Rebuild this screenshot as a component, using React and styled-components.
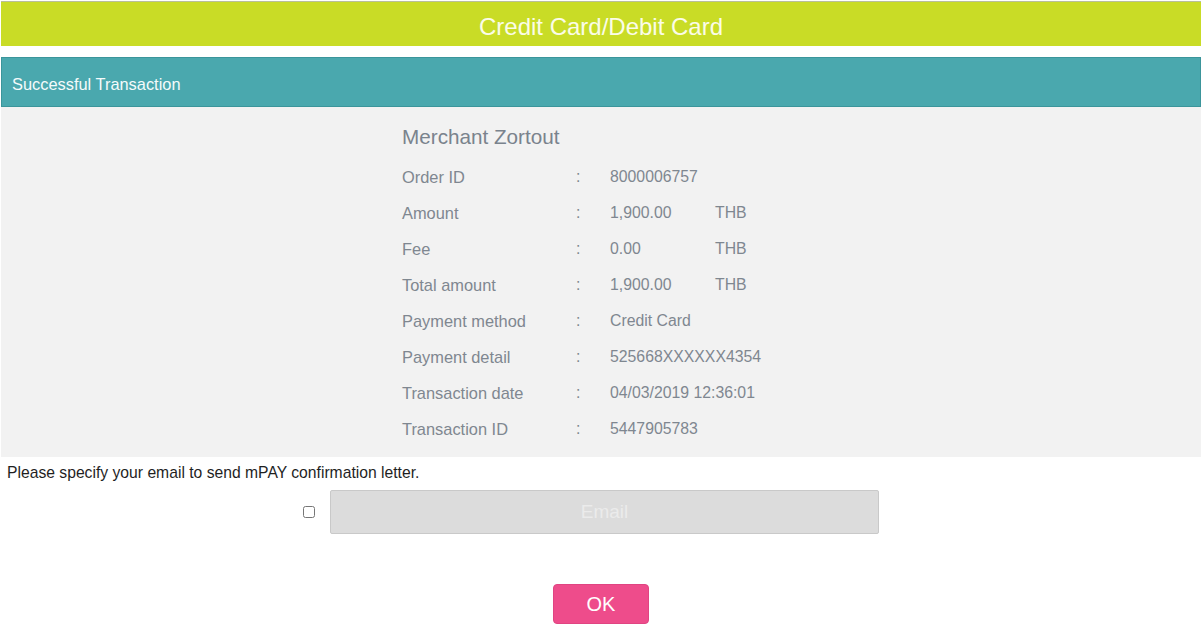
import React from "react";
import styled, { createGlobalStyle } from "styled-components";

const GlobalStyle = createGlobalStyle`
  html, body {
    margin: 0;
    padding: 0;
    background: #ffffff;
    font-family: "Liberation Sans", Arial, Helvetica, sans-serif;
  }
`;

const Page = styled.div`
  padding: 1px 1px 0 1px;
  width: 1200px;
`;

const TitleBar = styled.div`
  box-sizing: border-box;
  height: 45px;
  padding-top: 6px;
  background: #c9dc26;
  border-top: 1px solid #b9bf9a;
  display: flex;
  align-items: center;
  justify-content: center;
  color: #fbfce8;
  font-size: 24px;
`;

const StatusBar = styled.div`
  box-sizing: border-box;
  margin-top: 11px;
  height: 50px;
  padding: 4px 0 0 10px;
  background: #4aa8ae;
  border: 1px solid #3b959b;
  display: flex;
  align-items: center;
  color: #f4fbfb;
  font-size: 16.4px;
`;

const DetailPanel = styled.div`
  background: #f2f2f2;
  padding: 17px 0 1px;
  display: flex;
  justify-content: center;
`;

const DetailBlock = styled.div`
  width: 398px;
  color: #7f8790;
`;

const Merchant = styled.div`
  font-size: 20.7px;
  height: 26px;
  line-height: 26px;
  margin-bottom: 18px;
  color: #7a838d;
`;

const InfoRow = styled.div`
  display: grid;
  grid-template-columns: 174px 34px 105px auto;
  height: 36px;
  line-height: 18px;
  font-size: 15.8px;
`;

const Label = styled.span`
  font-size: 16.4px;
`;

const Value = styled.span`
  white-space: nowrap;
`;

const Note = styled.div`
  padding: 7px 6px 0;
  font-size: 15.7px;
  color: #1f1f1f;
  height: 17px;
  line-height: 17px;
`;

const EmailRow = styled.div`
  display: flex;
  align-items: center;
  justify-content: center;
  gap: 15px;
  padding-right: 20px;
  margin-top: 9px;
`;

const Check = styled.input`
  width: 12px;
  height: 12px;
  margin: 0;
`;

const EmailInput = styled.input`
  box-sizing: border-box;
  width: 549px;
  height: 44px;
  background: #dcdcdc;
  border: 1px solid #c9c9c9;
  border-radius: 2px;
  text-align: center;
  font-family: "Liberation Sans", Arial, sans-serif;
  font-size: 19px;
  color: #555;
  &::placeholder {
    color: #ebebeb;
  }
`;

const ButtonRow = styled.div`
  display: flex;
  justify-content: center;
  margin-top: 50px;
`;

const OkButton = styled.button`
  width: 96px;
  height: 40px;
  background: #ee4c8b;
  border: 1px solid #e04482;
  border-radius: 4px;
  color: #ffffff;
  font-family: "Liberation Sans", Arial, sans-serif;
  font-size: 20px;
  cursor: pointer;
`;

const rows = [
  ["Order ID", "8000006757", ""],
  ["Amount", "1,900.00", "THB"],
  ["Fee", "0.00", "THB"],
  ["Total amount", "1,900.00", "THB"],
  ["Payment method", "Credit Card", ""],
  ["Payment detail", "525668XXXXXX4354", ""],
  ["Transaction date", "04/03/2019 12:36:01", ""],
  ["Transaction ID", "5447905783", ""],
];

export default function App() {
  return (
    <Page>
      <GlobalStyle />
      <TitleBar>Credit Card/Debit Card</TitleBar>
      <StatusBar>Successful Transaction</StatusBar>
      <DetailPanel>
        <DetailBlock>
          <Merchant>Merchant Zortout</Merchant>
          {rows.map(([label, value, unit]) => (
            <InfoRow key={label}>
              <Label>{label}</Label>
              <span>:</span>
              <Value>{value}</Value>
              <span>{unit}</span>
            </InfoRow>
          ))}
        </DetailBlock>
      </DetailPanel>
      <Note>Please specify your email to send mPAY confirmation letter.</Note>
      <EmailRow>
        <Check type="checkbox" />
        <EmailInput type="text" placeholder="Email" disabled />
      </EmailRow>
      <ButtonRow>
        <OkButton>OK</OkButton>
      </ButtonRow>
    </Page>
  );
}
